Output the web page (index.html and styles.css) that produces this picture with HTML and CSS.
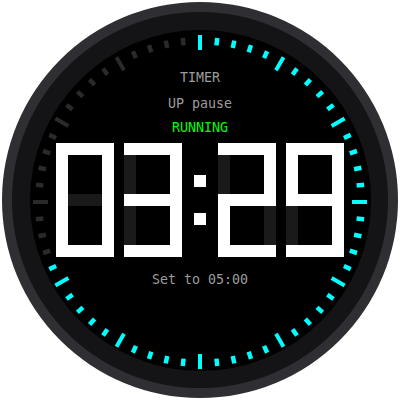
FILE: index.html
```html
<!DOCTYPE html>
<html>
<head>
<meta charset="utf-8">
<link rel="stylesheet" href="styles.css">
</head>
<body>
<div class="stage">
  <div class="bezel">
    <div class="ring">
      <div class="face">
        <div class="line title">TIMER</div>
        <div class="line mode">UP pause</div>
        <div class="line state">RUNNING</div>
        <div class="display" role="timer" aria-label="03:29" title="03:29">
          <div class="digit">
            <i class="seg a on"></i><i class="seg b on"></i><i class="seg c on"></i><i class="seg d on"></i><i class="seg e on"></i><i class="seg f on"></i><i class="seg g"></i>
          </div>
          <div class="digit">
            <i class="seg a on"></i><i class="seg b on"></i><i class="seg c on"></i><i class="seg d on"></i><i class="seg e"></i><i class="seg f"></i><i class="seg g on"></i>
          </div>
          <div class="colon"><i class="dot"></i><i class="dot"></i></div>
          <div class="digit">
            <i class="seg a on"></i><i class="seg b on"></i><i class="seg c"></i><i class="seg d on"></i><i class="seg e on"></i><i class="seg f"></i><i class="seg g on"></i>
          </div>
          <div class="digit">
            <i class="seg a on"></i><i class="seg b on"></i><i class="seg c on"></i><i class="seg d on"></i><i class="seg e"></i><i class="seg f on"></i><i class="seg g on"></i>
          </div>
        </div>
        <div class="line target">Set to 05:00</div>
      </div>
    </div>
  </div>
  <svg class="ticks" viewBox="0 0 400 400" width="400" height="400">
    <rect class="on" x="198" y="33" width="4" height="15" transform="rotate(0 200 200)"/>
    <rect class="on" x="197.75" y="35" width="4.5" height="7.5" transform="rotate(6 200 200)"/>
    <rect class="on" x="197.75" y="35" width="4.5" height="7.5" transform="rotate(12 200 200)"/>
    <rect class="on" x="197.75" y="35" width="4.5" height="7.5" transform="rotate(18 200 200)"/>
    <rect class="on" x="197.75" y="35" width="4.5" height="7.5" transform="rotate(24 200 200)"/>
    <rect class="on" x="198" y="33" width="4" height="15" transform="rotate(30 200 200)"/>
    <rect class="on" x="197.75" y="35" width="4.5" height="7.5" transform="rotate(36 200 200)"/>
    <rect class="on" x="197.75" y="35" width="4.5" height="7.5" transform="rotate(42 200 200)"/>
    <rect class="on" x="197.75" y="35" width="4.5" height="7.5" transform="rotate(48 200 200)"/>
    <rect class="on" x="197.75" y="35" width="4.5" height="7.5" transform="rotate(54 200 200)"/>
    <rect class="on" x="198" y="33" width="4" height="15" transform="rotate(60 200 200)"/>
    <rect class="on" x="197.75" y="35" width="4.5" height="7.5" transform="rotate(66 200 200)"/>
    <rect class="on" x="197.75" y="35" width="4.5" height="7.5" transform="rotate(72 200 200)"/>
    <rect class="on" x="197.75" y="35" width="4.5" height="7.5" transform="rotate(78 200 200)"/>
    <rect class="on" x="197.75" y="35" width="4.5" height="7.5" transform="rotate(84 200 200)"/>
    <rect class="on" x="198" y="33" width="4" height="15" transform="rotate(90 200 200)"/>
    <rect class="on" x="197.75" y="35" width="4.5" height="7.5" transform="rotate(96 200 200)"/>
    <rect class="on" x="197.75" y="35" width="4.5" height="7.5" transform="rotate(102 200 200)"/>
    <rect class="on" x="197.75" y="35" width="4.5" height="7.5" transform="rotate(108 200 200)"/>
    <rect class="on" x="197.75" y="35" width="4.5" height="7.5" transform="rotate(114 200 200)"/>
    <rect class="on" x="198" y="33" width="4" height="15" transform="rotate(120 200 200)"/>
    <rect class="on" x="197.75" y="35" width="4.5" height="7.5" transform="rotate(126 200 200)"/>
    <rect class="on" x="197.75" y="35" width="4.5" height="7.5" transform="rotate(132 200 200)"/>
    <rect class="on" x="197.75" y="35" width="4.5" height="7.5" transform="rotate(138 200 200)"/>
    <rect class="on" x="197.75" y="35" width="4.5" height="7.5" transform="rotate(144 200 200)"/>
    <rect class="on" x="198" y="33" width="4" height="15" transform="rotate(150 200 200)"/>
    <rect class="on" x="197.75" y="35" width="4.5" height="7.5" transform="rotate(156 200 200)"/>
    <rect class="on" x="197.75" y="35" width="4.5" height="7.5" transform="rotate(162 200 200)"/>
    <rect class="on" x="197.75" y="35" width="4.5" height="7.5" transform="rotate(168 200 200)"/>
    <rect class="on" x="197.75" y="35" width="4.5" height="7.5" transform="rotate(174 200 200)"/>
    <rect class="on" x="198" y="33" width="4" height="15" transform="rotate(180 200 200)"/>
    <rect class="on" x="197.75" y="35" width="4.5" height="7.5" transform="rotate(186 200 200)"/>
    <rect class="on" x="197.75" y="35" width="4.5" height="7.5" transform="rotate(192 200 200)"/>
    <rect class="on" x="197.75" y="35" width="4.5" height="7.5" transform="rotate(198 200 200)"/>
    <rect class="on" x="197.75" y="35" width="4.5" height="7.5" transform="rotate(204 200 200)"/>
    <rect class="on" x="198" y="33" width="4" height="15" transform="rotate(210 200 200)"/>
    <rect class="on" x="197.75" y="35" width="4.5" height="7.5" transform="rotate(216 200 200)"/>
    <rect class="on" x="197.75" y="35" width="4.5" height="7.5" transform="rotate(222 200 200)"/>
    <rect class="on" x="197.75" y="35" width="4.5" height="7.5" transform="rotate(228 200 200)"/>
    <rect class="on" x="197.75" y="35" width="4.5" height="7.5" transform="rotate(234 200 200)"/>
    <rect class="on" x="198" y="33" width="4" height="15" transform="rotate(240 200 200)"/>
    <rect class="on" x="197.75" y="35" width="4.5" height="7.5" transform="rotate(246 200 200)"/>
    <rect class="off" x="197.75" y="35" width="4.5" height="7.5" transform="rotate(252 200 200)"/>
    <rect class="off" x="197.75" y="35" width="4.5" height="7.5" transform="rotate(258 200 200)"/>
    <rect class="off" x="197.75" y="35" width="4.5" height="7.5" transform="rotate(264 200 200)"/>
    <rect class="off" x="198" y="33" width="4" height="15" transform="rotate(270 200 200)"/>
    <rect class="off" x="197.75" y="35" width="4.5" height="7.5" transform="rotate(276 200 200)"/>
    <rect class="off" x="197.75" y="35" width="4.5" height="7.5" transform="rotate(282 200 200)"/>
    <rect class="off" x="197.75" y="35" width="4.5" height="7.5" transform="rotate(288 200 200)"/>
    <rect class="off" x="197.75" y="35" width="4.5" height="7.5" transform="rotate(294 200 200)"/>
    <rect class="off" x="198" y="33" width="4" height="15" transform="rotate(300 200 200)"/>
    <rect class="off" x="197.75" y="35" width="4.5" height="7.5" transform="rotate(306 200 200)"/>
    <rect class="off" x="197.75" y="35" width="4.5" height="7.5" transform="rotate(312 200 200)"/>
    <rect class="off" x="197.75" y="35" width="4.5" height="7.5" transform="rotate(318 200 200)"/>
    <rect class="off" x="197.75" y="35" width="4.5" height="7.5" transform="rotate(324 200 200)"/>
    <rect class="off" x="198" y="33" width="4" height="15" transform="rotate(330 200 200)"/>
    <rect class="off" x="197.75" y="35" width="4.5" height="7.5" transform="rotate(336 200 200)"/>
    <rect class="off" x="197.75" y="35" width="4.5" height="7.5" transform="rotate(342 200 200)"/>
    <rect class="off" x="197.75" y="35" width="4.5" height="7.5" transform="rotate(348 200 200)"/>
    <rect class="off" x="197.75" y="35" width="4.5" height="7.5" transform="rotate(354 200 200)"/>
  </svg>
</div>
</body>
</html>
```

FILE: styles.css
```css
html, body {
  margin: 0;
  padding: 0;
  background: #ffffff;
}

.stage {
  position: relative;
  width: 400px;
  height: 400px;
}

.bezel {
  box-sizing: border-box;
  width: 396px;
  height: 396px;
  margin: 2px;
  border-radius: 50%;
  background: #2e2e33;
  display: grid;
  place-items: center;
}

.ring {
  width: 376px;
  height: 376px;
  border-radius: 50%;
  background: #141417;
  display: grid;
  place-items: center;
}

.face {
  box-sizing: border-box;
  width: 341px;
  height: 341px;
  border-radius: 50%;
  background: #000000;
  display: flex;
  flex-direction: column;
  align-items: center;
  padding-top: 40.5px;
  font-family: "DejaVu Sans Mono", "Liberation Mono", monospace;
  font-size: 13.3px;
}

.line {
  height: 16px;
  line-height: 16px;
  white-space: nowrap;
  color: #9c9c9c;
}

.mode {
  margin-top: 10px;
}

.state {
  margin-top: 8px;
  color: #00ff00;
}

.display {
  margin-top: 7px;
  display: flex;
  height: 114px;
}

.display .digit + .digit {
  margin-left: 10px;
}

.colon {
  width: 12px;
  margin: 0 12px;
  display: flex;
  flex-direction: column;
  gap: 26px;
  padding-top: 32px;
}

.dot {
  display: block;
  width: 12px;
  height: 12px;
  background: #ffffff;
}

.digit {
  display: grid;
  grid-template-columns: 12px 34px 12px;
  grid-template-rows: 12px 39px 12px 39px 12px;
  width: 58px;
  height: 114px;
}

.seg {
  display: block;
  background: #1a1a1a;
  z-index: 0;
}

.seg.on {
  background: #ffffff;
  z-index: 1;
}

.a { grid-area: 1 / 1 / 2 / 4; }
.g { grid-area: 3 / 1 / 4 / 4; }
.d { grid-area: 5 / 1 / 6 / 4; }
.f { grid-area: 1 / 1 / 4 / 2; }
.e { grid-area: 3 / 1 / 6 / 2; }
.b { grid-area: 1 / 3 / 4 / 4; }
.c { grid-area: 3 / 3 / 6 / 4; }

.target {
  margin-top: 15.4px;
}

.ticks {
  position: absolute;
  left: 0;
  top: 0;
  pointer-events: none;
}

.ticks .on {
  fill: #00ffff;
}

.ticks .off {
  fill: #2a2a2a;
}
```
